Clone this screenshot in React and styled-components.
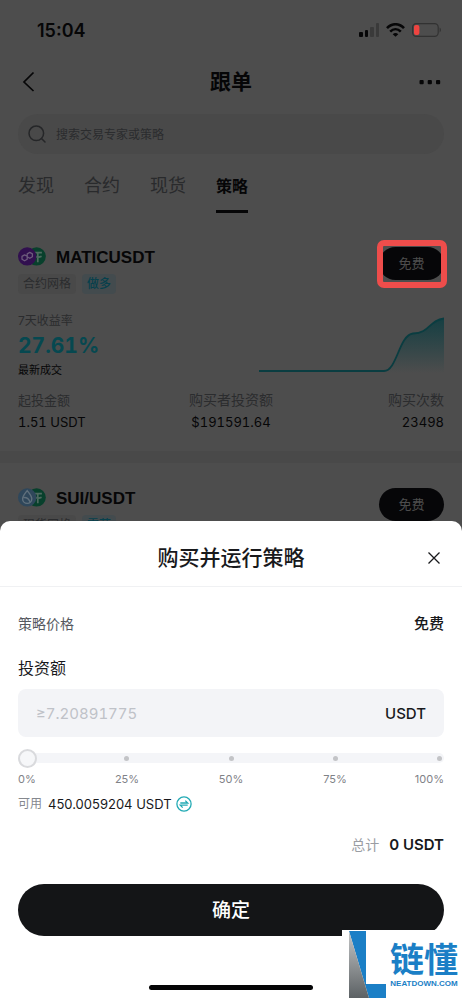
import React from "react";
import styled, { createGlobalStyle } from "styled-components";

const GlobalStyle = createGlobalStyle`
  *, *::before, *::after { box-sizing: border-box; }
  body {
    margin: 0;
    background: #4d4d4d;
    font-family: Inter, "Noto Sans CJK SC", sans-serif;
    color: #18191c;
  }
  button, input { font-family: inherit; color: inherit; }
  button { border: 0; padding: 0; background: none; cursor: pointer; }
  h1, h2, h3, p, dl, dt, dd { margin: 0; font-weight: inherit; }
`;

const Screen = styled.div`
  position: relative;
  min-height: 100vh;
  overflow: hidden;
`;

const Market = styled.main`
  height: 100vh;
  overflow: hidden;
  color: #060607;
`;

const StatusBar = styled.div`
  display: flex;
  align-items: center;
  justify-content: space-between;
  height: 60px;
  padding: 0 20px 0 37px;
  font-size: 18px;
  font-weight: 600;
`;

const StatusIcons = styled.div`
  display: flex;
  align-items: center;
  gap: 7px;
`;

const NavBar = styled.header`
  display: grid;
  grid-template-columns: 24px 1fr 24px;
  align-items: center;
  height: 44px;
  padding: 0 20px 0 16px;
`;

const NavTitle = styled.h1`
  padding-left: 4px;
  font-size: 21px;
  line-height: 30px;
  font-weight: 700;
  text-align: center;
`;

const IconButton = styled.button`
  display: flex;
  align-items: center;
  justify-content: center;
  width: 24px;
  height: 24px;
`;

const SearchBox = styled.label`
  display: flex;
  align-items: center;
  gap: 10px;
  height: 40px;
  margin: 10px 18px 0;
  padding: 0 10px;
  border-radius: 20px;
  background: #494949;
`;

const SearchInput = styled.input`
  flex: 1;
  min-width: 0;
  border: 0;
  padding: 0;
  outline: 0;
  background: transparent;
  font-size: 12px;
  &::placeholder { color: #2b2c2e; opacity: 1; }
`;

const Tabs = styled.nav`
  display: flex;
  gap: 30px;
  margin: 18px 18px 9px;
`;

const Tab = styled.a`
  height: 41px;
  line-height: 28px;
  text-decoration: none;
  font-size: ${(p) => (p.$active ? 16 : 18)}px;
  font-weight: ${(p) => (p.$active ? 700 : 400)};
  color: ${(p) => (p.$active ? "#060607" : "#292a2c")};
  border-bottom: 3px solid ${(p) => (p.$active ? "#060607" : "transparent")};
`;

const Card = styled.article`
  padding: 25px 18px 18px;
  border-bottom: 12px solid #494949;
`;

const CardHead = styled.div`
  display: flex;
  justify-content: space-between;
  align-items: flex-start;
`;

const Pair = styled.div`
  display: flex;
  align-items: flex-start;
  gap: 10px;
  height: 22px;
`;

const PairName = styled.h2`
  font-size: 17px;
  line-height: 22px;
  font-weight: 700;
  font-family: "Liberation Sans", sans-serif;
`;

const Tags = styled.div`
  display: flex;
  gap: 6px;
  margin-top: 5px;
`;

const Tag = styled.span`
  height: 20px;
  line-height: 20px;
  padding: 0 5px;
  border-radius: 4px;
  font-size: 12px;
  font-weight: ${(p) => (p.$accent ? 500 : 400)};
  color: ${(p) => (p.$accent ? "#07404c" : "#2b2c2e")};
  background: ${(p) => (p.$accent ? "#434b4e" : "#494949")};
`;

const BuySlot = styled.div`
  position: relative;
`;

const BuyButton = styled.button`
  display: block;
  width: 65px;
  height: 33px;
  padding-bottom: 2px;
  border-radius: 17px;
  background: #060608;
  color: #4d4d4d;
  font-size: 13px;
`;

const FocusRing = styled.span`
  position: absolute;
  inset: -7px -3px -8px -2px;
  border: 6px solid #ee4d4b;
  border-radius: 7px;
  pointer-events: none;
`;

const Performance = styled.div`
  display: flex;
  justify-content: space-between;
  align-items: center;
  margin-top: 18px;
`;

const Caption = styled.p`
  font-size: 12px;
  line-height: 18px;
  color: #2b2c2e;
`;

const Yield = styled.p`
  font-size: 21px;
  font-variant-numeric: tabular-nums;
  line-height: 32px;
  font-weight: 700;
  color: #064850;
`;

const Latest = styled.p`
  font-size: 11px;
  line-height: 16px;
`;

const Figures = styled.dl`
  display: grid;
  grid-template-columns: repeat(3, 1fr);
  margin-top: 11px;
  line-height: 22px;
`;

const Figure = styled.div`
  text-align: ${(p) => p.$align};
`;

const FigureLabel = styled.dt`
  font-size: ${(p) => (p.$small ? 13 : 14)}px;
  color: #2b2c2e;
`;

const FigureValue = styled.dd`
  font-size: 13px;
  font-variant-numeric: tabular-nums;
`;

const Sheet = styled.section`
  position: absolute;
  left: 0;
  right: 0;
  bottom: 0;
  border-radius: 10px 10px 0 0;
  background: #fff;
`;

const SheetHead = styled.header`
  display: grid;
  grid-template-columns: 24px 1fr 24px;
  align-items: center;
  height: 66px;
  padding: 8px 16px 0;
  border-bottom: 1px solid #f0f1f3;
`;

const SheetTitle = styled.h2`
  grid-column: 2;
  text-align: center;
  font-size: 21px;
  line-height: 30px;
  font-weight: 500;
`;

const SheetBody = styled.form`
  padding: 25px 18px 10px;
`;

const PriceRow = styled.div`
  display: flex;
  justify-content: space-between;
  line-height: 24px;
  font-size: 14px;
  color: #55585e;
`;

const Price = styled.strong`
  font-size: 15px;
  font-weight: 500;
  color: #18191c;
`;

const FieldLabel = styled.label`
  display: block;
  margin-top: 20px;
  font-size: 16px;
  line-height: 24px;
`;

const AmountField = styled.div`
  display: flex;
  align-items: center;
  height: 48px;
  margin-top: 9px;
  padding: 0 18px;
  border-radius: 8px;
  background: #f3f4f7;
`;

const AmountInput = styled.input`
  flex: 1;
  min-width: 0;
  border: 0;
  padding: 0;
  outline: 0;
  background: transparent;
  font-size: 15px;
  font-variant-numeric: tabular-nums;
  &::placeholder { color: #bfc2c8; opacity: 1; }
`;

const Unit = styled.span`
  font-size: 15px;
  font-weight: 500;
`;

const SliderStack = styled.div`
  display: grid;
  align-items: center;
  height: 20px;
  margin-top: 11px;
  > * { grid-area: 1 / 1; }
`;

const Track = styled.div`
  display: flex;
  justify-content: space-between;
  align-items: center;
  height: 10px;
  padding: 0 2px;
  border-radius: 5px;
  background: #f4f5f8;
`;

const Stop = styled.span`
  width: 5px;
  height: 5px;
  border-radius: 50%;
  background: #c3c4c7;
`;

const Slider = styled.input`
  appearance: none;
  width: 100%;
  height: 20px;
  margin: 0;
  background: transparent;
  &::-webkit-slider-thumb {
    appearance: none;
    width: 19px;
    height: 19px;
    border: 2px solid #d9dadd;
    border-radius: 50%;
    background: #f6f7f9;
  }
`;

const Scale = styled.div`
  display: grid;
  grid-template-columns: 57px repeat(3, 1fr) 57px;
  margin-top: 3px;
  font-size: 11px;
  line-height: 16px;
  text-align: center;
  color: #7f8287;
  > :first-child { text-align: left; }
  > :last-child { text-align: right; }
`;

const Available = styled.div`
  display: flex;
  align-items: center;
  margin-top: 7px;
  line-height: 20px;
  font-size: 12px;
  color: #85888e;
`;

const Balance = styled.span`
  margin: 0 4px 0 6px;
  font-size: 13px;
  color: #18191c;
`;

const SwapButton = styled.button`
  display: flex;
`;

const Total = styled.div`
  display: flex;
  justify-content: flex-end;
  gap: 10px;
  margin-top: 19px;
  line-height: 24px;
  font-size: 14px;
  color: #9a9da3;
`;

const TotalValue = styled.strong`
  font-size: 15px;
  font-weight: 600;
  color: #18191c;
`;

const Confirm = styled.button`
  display: block;
  width: 100%;
  height: 52px;
  margin-top: 27px;
  padding-bottom: 4px;
  border-radius: 26px;
  background: #141517;
  color: #fff;
  font-size: 19px;
  font-weight: 500;
`;

const HomeIndicator = styled.div`
  width: 164px;
  height: 5px;
  margin: 49px auto 0;
  border-radius: 3px;
  background: #050506;
`;

const Watermark = styled.aside`
  position: absolute;
  right: 0;
  bottom: 0;
  display: flex;
  gap: 4px;
  width: 120px;
  height: 70px;
  padding: 1px 0 0 7px;
  background: #fff;
  color: #1b7fc6;
`;

const WatermarkText = styled.div`
  padding-top: 10px;
  text-align: center;
  white-space: nowrap;
`;

const WatermarkName = styled.p`
  font-size: 34px;
  line-height: 38px;
  font-weight: 700;
`;

const WatermarkSite = styled.p`
  font-family: "Liberation Sans", sans-serif;
  font-size: 8px;
  line-height: 10px;
  font-weight: 700;
`;

function Signal() {
  return (
    <svg width="20" height="14" viewBox="0 0 20 14">
      <rect x="0" y="9" width="4" height="5" rx="1" fill="#060607" />
      <rect x="6" y="7" width="3" height="7" rx="1" fill="#060607" />
      <rect x="11" y="4" width="4" height="10" rx="1" fill="#3a3a3a" />
      <rect x="17" y="0" width="3" height="14" rx="1" fill="#3a3a3a" />
    </svg>
  );
}

function Wifi() {
  return (
    <svg width="19" height="14" viewBox="0 0 19 14" fill="none" stroke="#060607" strokeWidth="2.6">
      <path d="M1 5.2C6-.1 13-.1 18 5.2" />
      <path d="M4.2 8.6C7.4 5.4 11.6 5.4 14.8 8.6" />
      <path d="M9.5 13.8 6.7 11.2C8.4 9.6 10.6 9.6 12.3 11.2Z" fill="#060607" stroke="none" />
    </svg>
  );
}

function Battery() {
  return (
    <svg width="30" height="14" viewBox="0 0 30 14">
      <rect x=".6" y=".6" width="25.6" height="12.8" rx="3.6" fill="none" stroke="#323232" strokeWidth="1.2" />
      <rect x="2" y="2" width="5.4" height="10" rx="2" fill="#ef4440" />
      <path d="M27.6 4.6c1.8.8 1.8 4 0 4.8z" fill="#323232" />
    </svg>
  );
}

function Tether() {
  return (
    <>
      <circle cx="18.6" cy="9.4" r="9.2" fill="#08402c" />
      <path d="M16.500 5.600h7.400M19.800 5.600v9.600M17 9.300c2 .9 4.700.9 6.600 0" fill="none" stroke="#4f6a60" strokeWidth="1.700" />
    </>
  );
}

function MaticIcon() {
  return (
    <svg width="28" height="20" viewBox="0 0 28 20">
      <Tether />
      <circle cx="9.200" cy="9.400" r="9.200" fill="#31104f" />
      <path
        d="M9.200 9.300 6.600 7.900 4 9.400v2.900l2.600 1.500 2.600-1.500V6.900L11.800 5.400l2.600 1.500v2.900l-2.600 1.500-2.600-1.400"
        fill="none" stroke="#6c5a7c" strokeWidth="1.300" strokeLinejoin="round"
      />
    </svg>
  );
}

function SuiIcon() {
  return (
    <svg width="28" height="20" viewBox="0 0 28 20">
      <Tether />
      <circle cx="9.200" cy="9.400" r="9.200" fill="#2f475b" />
      <path d="M9.200 2.600c2.800 3.600 4.600 5.600 4.600 8.200a4.600 4.600 0 0 1-9.200 0C4.600 8.200 6.400 6.200 9.200 2.600Z" fill="none" stroke="#60707c" strokeWidth="1.400" />
      <path d="M5.200 9.600c2.800-.4 5.600.8 7 4.600" fill="none" stroke="#60707c" strokeWidth="1.400" />
    </svg>
  );
}

function YieldChart() {
  return (
    <svg width="185" height="60" viewBox="0 0 185 60">
      <defs>
        <linearGradient id="yieldFill" x1="0" y1="0" x2="0" y2="1">
          <stop offset="0" stopColor="#153f43" />
          <stop offset="1" stopColor="#4d4d4d" />
        </linearGradient>
      </defs>
      <path d="M125 56C138 56 140 20 154 18.500C171 18 170 5 185 3.500V58H125Z" fill="url(#yieldFill)" />
      <path d="M0 56H125C138 56 140 20 154 18.500C171 18 170 5 185 3.500" fill="none" stroke="#0a3d41" strokeWidth="1.800" />
    </svg>
  );
}

function Strategy({ icon, name, kind, side, highlighted, children }) {
  return (
    <Card>
      <CardHead>
        <div>
          <Pair>
            {icon}
            <PairName>{name}</PairName>
          </Pair>
          <Tags>
            <Tag>{kind}</Tag>
            <Tag $accent>{side}</Tag>
          </Tags>
        </div>
        <BuySlot>
          <BuyButton type="button">免费</BuyButton>
          {highlighted && <FocusRing />}
        </BuySlot>
      </CardHead>
      {children}
    </Card>
  );
}

export default function App() {
  return (
    <Screen>
      <GlobalStyle />
      <Market>
        <StatusBar>
          <span>15:04</span>
          <StatusIcons>
            <Signal />
            <Wifi />
            <Battery />
          </StatusIcons>
        </StatusBar>
        <NavBar>
          <IconButton type="button" aria-label="返回">
            <svg width="24" height="24" viewBox="0 0 24 24" fill="none" stroke="#060607" strokeWidth="1.700">
              <path d="M17.500 2.500 8 12l9.500 9" />
            </svg>
          </IconButton>
          <NavTitle>跟单</NavTitle>
          <IconButton type="button" aria-label="更多">
            <svg width="24" height="24" viewBox="0 0 24 24" fill="#060607">
              <rect x="1.500" y="10" width="4.200" height="4.200" rx="1" />
              <rect x="9.700" y="10" width="4.200" height="4.200" rx="1" />
              <rect x="18" y="10" width="4.200" height="4.200" rx="1" />
            </svg>
          </IconButton>
        </NavBar>
        <SearchBox>
          <svg width="18" height="18" viewBox="0 0 18 18" fill="none" stroke="#252628" strokeWidth="1.500" strokeLinecap="round">
            <circle cx="8.300" cy="8.300" r="7.300" />
            <path d="M13.500 13.500 17 17" />
          </svg>
          <SearchInput type="text" aria-label="搜索" placeholder="搜索交易专家或策略" />
        </SearchBox>
        <Tabs>
          <Tab href="#discover">发现</Tab>
          <Tab href="#futures">合约</Tab>
          <Tab href="#spot">现货</Tab>
          <Tab href="#strategy" $active>策略</Tab>
        </Tabs>
        <Strategy icon={<MaticIcon />} name="MATICUSDT" kind="合约网格" side="做多" highlighted>
          <Performance>
            <div>
              <Caption>7天收益率</Caption>
              <Yield>27.61%</Yield>
              <Latest>最新成交</Latest>
            </div>
            <YieldChart />
          </Performance>
          <Figures>
            <Figure $align="left">
              <FigureLabel $small>起投金额</FigureLabel>
              <FigureValue>1.51 USDT</FigureValue>
            </Figure>
            <Figure $align="center">
              <FigureLabel>购买者投资额</FigureLabel>
              <FigureValue>$191591.64</FigureValue>
            </Figure>
            <Figure $align="right">
              <FigureLabel>购买次数</FigureLabel>
              <FigureValue>23498</FigureValue>
            </Figure>
          </Figures>
        </Strategy>
        <Strategy icon={<SuiIcon />} name="SUI/USDT" kind="现货网格" side="震荡" />
      </Market>

      <Sheet>
        <SheetHead>
          <SheetTitle>购买并运行策略</SheetTitle>
          <IconButton type="button" aria-label="关闭">
            <svg width="14" height="14" viewBox="0 0 14 14" fill="none" stroke="#18191c" strokeWidth="1.300">
              <path d="M1.500 1.500l11 11M12.500 1.500l-11 11" />
            </svg>
          </IconButton>
        </SheetHead>
        <SheetBody onSubmit={(e) => e.preventDefault()}>
          <PriceRow>
            <span>策略价格</span>
            <Price>免费</Price>
          </PriceRow>
          <FieldLabel htmlFor="amount">投资额</FieldLabel>
          <AmountField>
            <AmountInput id="amount" type="text" inputMode="decimal" placeholder="≥7.20891775" />
            <Unit>USDT</Unit>
          </AmountField>
          <SliderStack>
            <Track>
              <Stop />
              <Stop />
              <Stop />
              <Stop />
              <Stop />
            </Track>
            <Slider type="range" min="0" max="100" defaultValue="0" aria-label="投资比例" />
          </SliderStack>
          <Scale>
            <span>0%</span>
            <span>25%</span>
            <span>50%</span>
            <span>75%</span>
            <span>100%</span>
          </Scale>
          <Available>
            可用
            <Balance>450.0059204 USDT</Balance>
            <SwapButton type="button" aria-label="划转">
              <svg width="16" height="16" viewBox="0 0 16 16" fill="none" stroke="#22aab4" strokeWidth="1.300">
                <circle cx="8" cy="8" r="7.100" />
                <path d="M4.300 7h7.400L9.300 4.600M11.700 9.200H4.300l2.400 2.400" />
              </svg>
            </SwapButton>
          </Available>
          <Total>
            总计
            <TotalValue>0 USDT</TotalValue>
          </Total>
          <Confirm type="submit">确定</Confirm>
          <HomeIndicator />
        </SheetBody>
      </Sheet>

      <Watermark>
        <svg width="37" height="68" viewBox="0 0 37 68">
          <defs>
            <linearGradient id="markShade" x1="0" y1="0" x2="0" y2="1">
              <stop offset="0" stopColor="#c4c6c7" />
              <stop offset="1" stopColor="#5c6164" />
            </linearGradient>
          </defs>
          <path d="M0 0H17V53H37V67H20Z" fill="#1b7fc6" />
          <path d="M0 0V67H20Z" fill="url(#markShade)" />
        </svg>
        <WatermarkText>
          <WatermarkName>链懂</WatermarkName>
          <WatermarkSite>NEATDOWN.COM</WatermarkSite>
        </WatermarkText>
      </Watermark>
    </Screen>
  );
}
